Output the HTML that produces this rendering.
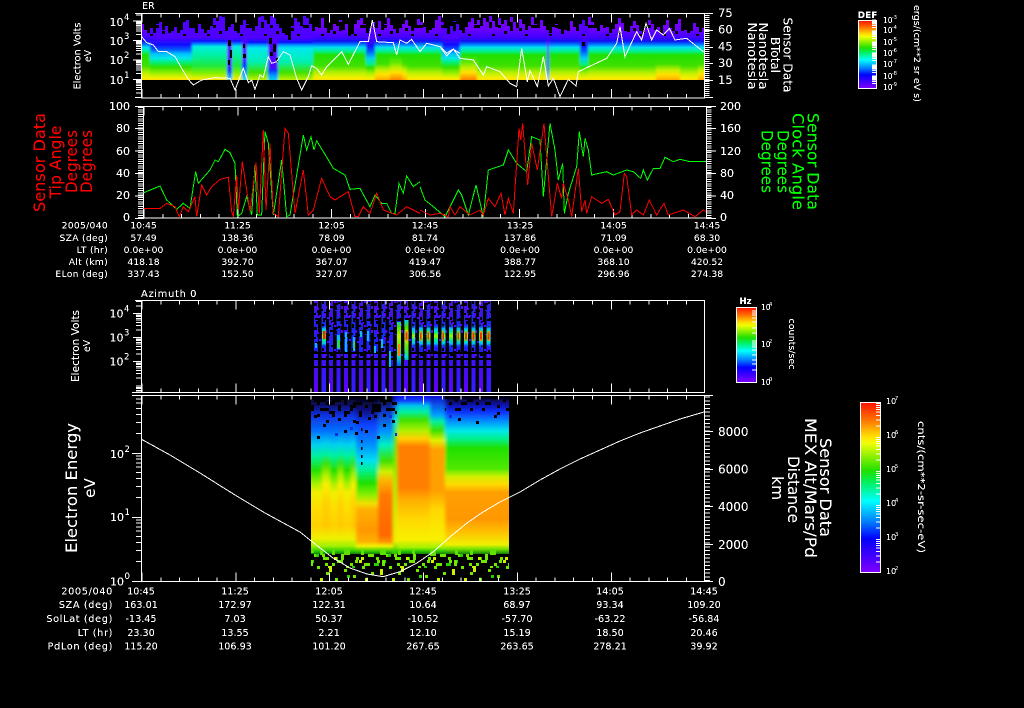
<!DOCTYPE html>
<html><head><meta charset="utf-8"><title>Sensor Data</title>
<style>
html,body{margin:0;padding:0;background:#000;width:1024px;height:708px;overflow:hidden}
svg{display:block}
text{font-family:"DejaVu Sans","Liberation Sans",sans-serif;fill:#fff}
.t1{font-size:9.2px;text-anchor:middle}
.t1l{font-size:9.2px;text-anchor:end;letter-spacing:.3px}
.t2{font-size:9.6px;text-anchor:middle}
.t2l{font-size:9.8px;text-anchor:end;letter-spacing:.6px}
.n{font-size:11px;text-anchor:end}
.nl{font-size:11.5px}
.e{font-size:8.5px}
.ln{fill:none;stroke-width:1;vector-effect:non-scaling-stroke;shape-rendering:crispEdges}
.ax{fill:none;stroke:#fff;stroke-width:1;shape-rendering:crispEdges}
</style></head><body>
<svg width="1024" height="708" viewBox="0 0 1024 708" xmlns="http://www.w3.org/2000/svg">
<defs>
<filter id="h" filterUnits="userSpaceOnUse" x="0" y="0" width="1024" height="708"><feComponentTransfer><feFuncA type="linear" slope="3" intercept="-0.75"/></feComponentTransfer></filter>
<filter id="b1" filterUnits="userSpaceOnUse" x="120" y="0" width="620" height="100"><feGaussianBlur stdDeviation="1 0"/></filter>
<filter id="b2" filterUnits="userSpaceOnUse" x="290" y="390" width="240" height="200"><feGaussianBlur stdDeviation="1.6 0"/></filter>
<clipPath id="c1"><rect x="141" y="16" width="563" height="64"/></clipPath>
<clipPath id="c4"><rect x="311" y="396" width="198" height="158"/></clipPath>
<clipPath id="a1"><rect x="120" y="13" width="600" height="85.5"/></clipPath>
<clipPath id="a3"><rect x="120" y="300" width="600" height="92.5"/></clipPath>
<clipPath id="a4"><rect x="120" y="395" width="600" height="187"/></clipPath>

<linearGradient id="bar" x1="0" y1="0" x2="0" y2="1"><stop offset="0" stop-color="#ff1000"/><stop offset=".1" stop-color="#ff7000"/><stop offset=".2" stop-color="#ffe000"/><stop offset=".24" stop-color="#f0ff00"/><stop offset=".4" stop-color="#20e000"/><stop offset=".47" stop-color="#00f060"/><stop offset=".58" stop-color="#00ffff"/><stop offset=".7" stop-color="#0080ff"/><stop offset=".8" stop-color="#0000ff"/><stop offset="1" stop-color="#8000ff"/></linearGradient>

<linearGradient id="N" gradientUnits="userSpaceOnUse" x1="0" y1="16" x2="0" y2="80"><stop offset=".19" stop-color="#7000ff"/><stop offset=".34" stop-color="#4000ff"/><stop offset=".39" stop-color="#1010f0"/><stop offset=".44" stop-color="#0070ff"/><stop offset=".49" stop-color="#00e0f0"/><stop offset=".55" stop-color="#00f090"/><stop offset=".61" stop-color="#20e000"/><stop offset=".78" stop-color="#40e000"/><stop offset=".88" stop-color="#b0f000"/><stop offset=".96" stop-color="#f0f000"/><stop offset="1" stop-color="#ffe000"/></linearGradient>
<linearGradient id="L" gradientUnits="userSpaceOnUse" x1="0" y1="16" x2="0" y2="80"><stop offset=".34" stop-color="#5000ff"/><stop offset=".45" stop-color="#1010ff"/><stop offset=".53" stop-color="#0060ff"/><stop offset=".59" stop-color="#00c0ff"/><stop offset=".66" stop-color="#00e8e8"/><stop offset=".72" stop-color="#00f080"/><stop offset=".8" stop-color="#30e000"/><stop offset=".9" stop-color="#a0f000"/><stop offset=".97" stop-color="#f0f000"/><stop offset="1" stop-color="#ffe000"/></linearGradient>
<linearGradient id="V" gradientUnits="userSpaceOnUse" x1="0" y1="16" x2="0" y2="80"><stop offset=".34" stop-color="#5000ff"/><stop offset=".39" stop-color="#1010ff"/><stop offset=".44" stop-color="#0090ff"/><stop offset=".48" stop-color="#00f0e0"/><stop offset=".62" stop-color="#00f0a0"/><stop offset=".78" stop-color="#20e840"/><stop offset=".89" stop-color="#80f000"/><stop offset=".97" stop-color="#e0f000"/><stop offset="1" stop-color="#ffe000"/></linearGradient>
<linearGradient id="C" gradientUnits="userSpaceOnUse" x1="0" y1="16" x2="0" y2="80"><stop offset=".34" stop-color="#5000ff"/><stop offset=".41" stop-color="#1010ff"/><stop offset=".45" stop-color="#0090ff"/><stop offset=".5" stop-color="#00e8f0"/><stop offset=".72" stop-color="#00f0b0"/><stop offset=".88" stop-color="#40e000"/><stop offset="1" stop-color="#c0f000"/></linearGradient>
<linearGradient id="D" gradientUnits="userSpaceOnUse" x1="0" y1="16" x2="0" y2="80"><stop offset=".8" stop-color="#5000ff"/><stop offset=".85" stop-color="#1030ff"/><stop offset=".92" stop-color="#0090ff"/><stop offset="1" stop-color="#00d0f0"/></linearGradient>
<linearGradient id="D2" gradientUnits="userSpaceOnUse" x1="0" y1="16" x2="0" y2="80"><stop offset=".69" stop-color="#5000ff"/><stop offset=".77" stop-color="#1030ff"/><stop offset=".88" stop-color="#0090ff"/><stop offset="1" stop-color="#00e0f0"/></linearGradient>
<linearGradient id="H" gradientUnits="userSpaceOnUse" x1="0" y1="16" x2="0" y2="80"><stop offset=".19" stop-color="#7000ff"/><stop offset=".34" stop-color="#4000ff"/><stop offset=".39" stop-color="#1010f0"/><stop offset=".44" stop-color="#0070ff"/><stop offset=".49" stop-color="#00e0f0"/><stop offset=".55" stop-color="#00f090"/><stop offset=".61" stop-color="#20e000"/><stop offset=".72" stop-color="#60e800"/><stop offset=".81" stop-color="#c0f000"/><stop offset=".88" stop-color="#ffe000"/><stop offset=".94" stop-color="#ffb000"/><stop offset="1" stop-color="#ff8000"/></linearGradient>
<linearGradient id="M" gradientUnits="userSpaceOnUse" x1="0" y1="16" x2="0" y2="80"><stop offset=".19" stop-color="#7000ff"/><stop offset=".34" stop-color="#4000ff"/><stop offset=".39" stop-color="#1010f0"/><stop offset=".44" stop-color="#0070ff"/><stop offset=".49" stop-color="#00e0f0"/><stop offset=".55" stop-color="#00f090"/><stop offset=".61" stop-color="#20e000"/><stop offset=".75" stop-color="#40e000"/><stop offset=".84" stop-color="#c0f000"/><stop offset=".91" stop-color="#ffe000"/><stop offset=".97" stop-color="#ffc000"/><stop offset="1" stop-color="#ffa800"/></linearGradient>
<linearGradient id="B" gradientUnits="userSpaceOnUse" x1="0" y1="16" x2="0" y2="80"><stop offset=".34" stop-color="#5000ff"/><stop offset=".47" stop-color="#1010ff"/><stop offset=".56" stop-color="#0060ff"/><stop offset=".66" stop-color="#00d0f0"/><stop offset=".75" stop-color="#00f090"/><stop offset=".81" stop-color="#30e000"/><stop offset=".89" stop-color="#a0f000"/><stop offset=".97" stop-color="#f0f000"/><stop offset="1" stop-color="#ffe000"/></linearGradient>

<linearGradient id="A4" gradientUnits="userSpaceOnUse" x1="0" y1="396" x2="0" y2="554"><stop offset="0" stop-color="#000"/><stop offset=".06" stop-color="#101070"/><stop offset=".12" stop-color="#1030e0"/><stop offset=".22" stop-color="#0070ff"/><stop offset=".31" stop-color="#00d0f0"/><stop offset=".38" stop-color="#00f0a0"/><stop offset=".47" stop-color="#20e000"/><stop offset=".55" stop-color="#a0f000"/><stop offset=".61" stop-color="#f0f000"/><stop offset=".72" stop-color="#ffdc00"/><stop offset=".82" stop-color="#ffd000"/><stop offset=".9" stop-color="#f0f000"/><stop offset=".95" stop-color="#a0f000"/><stop offset=".98" stop-color="#30d000"/><stop offset="1" stop-color="#108000"/></linearGradient>
<linearGradient id="A5" gradientUnits="userSpaceOnUse" x1="0" y1="396" x2="0" y2="554"><stop offset="0" stop-color="#000"/><stop offset=".06" stop-color="#101070"/><stop offset=".12" stop-color="#1030e0"/><stop offset=".22" stop-color="#0070ff"/><stop offset=".3" stop-color="#00d0f0"/><stop offset=".37" stop-color="#00f0a0"/><stop offset=".43" stop-color="#40e000"/><stop offset=".5" stop-color="#b0f000"/><stop offset=".56" stop-color="#f8f000"/><stop offset=".68" stop-color="#ffd000"/><stop offset=".82" stop-color="#ffc800"/><stop offset=".9" stop-color="#f0f000"/><stop offset=".95" stop-color="#a0f000"/><stop offset=".98" stop-color="#30d000"/><stop offset="1" stop-color="#108000"/></linearGradient>
<linearGradient id="B4" gradientUnits="userSpaceOnUse" x1="0" y1="396" x2="0" y2="554"><stop offset="0" stop-color="#000"/><stop offset=".09" stop-color="#101080"/><stop offset=".18" stop-color="#1040ff"/><stop offset=".31" stop-color="#0090ff"/><stop offset=".41" stop-color="#00e0f0"/><stop offset=".47" stop-color="#00f090"/><stop offset=".55" stop-color="#20e000"/><stop offset=".63" stop-color="#90f000"/><stop offset=".68" stop-color="#f0e000"/><stop offset=".72" stop-color="#ffb000"/><stop offset=".85" stop-color="#ff9800"/><stop offset=".92" stop-color="#ffb000"/><stop offset=".95" stop-color="#f0f000"/><stop offset=".98" stop-color="#40d000"/><stop offset="1" stop-color="#108000"/></linearGradient>
<linearGradient id="C4" gradientUnits="userSpaceOnUse" x1="0" y1="396" x2="0" y2="554"><stop offset="0" stop-color="#000"/><stop offset=".09" stop-color="#1030c0"/><stop offset=".22" stop-color="#0090ff"/><stop offset=".31" stop-color="#00f0c0"/><stop offset=".41" stop-color="#40e000"/><stop offset=".48" stop-color="#d0f000"/><stop offset=".54" stop-color="#ffb000"/><stop offset=".63" stop-color="#ff7800"/><stop offset=".88" stop-color="#ff6800"/><stop offset=".92" stop-color="#ff9000"/><stop offset=".95" stop-color="#f0f000"/><stop offset=".98" stop-color="#40d000"/><stop offset="1" stop-color="#108000"/></linearGradient>
<linearGradient id="D4" gradientUnits="userSpaceOnUse" x1="0" y1="396" x2="0" y2="554"><stop offset=".02" stop-color="#1010c0"/><stop offset=".15" stop-color="#00e0f0"/><stop offset=".28" stop-color="#40e000"/><stop offset=".53" stop-color="#a0f000"/><stop offset=".92" stop-color="#f0f000"/><stop offset=".98" stop-color="#40d000"/></linearGradient>
<linearGradient id="E4" gradientUnits="userSpaceOnUse" x1="0" y1="396" x2="0" y2="554"><stop offset="0" stop-color="#1010e0"/><stop offset=".03" stop-color="#1040ff"/><stop offset=".06" stop-color="#00c0f0"/><stop offset=".1" stop-color="#00f0a0"/><stop offset=".15" stop-color="#40e000"/><stop offset=".22" stop-color="#b0f000"/><stop offset=".27" stop-color="#ffd000"/><stop offset=".32" stop-color="#ff8000"/><stop offset=".58" stop-color="#ff8000"/><stop offset=".66" stop-color="#ffb000"/><stop offset=".78" stop-color="#ffd800"/><stop offset=".91" stop-color="#f8f000"/><stop offset=".96" stop-color="#a0f000"/><stop offset=".98" stop-color="#30d000"/><stop offset="1" stop-color="#108000"/></linearGradient>
<linearGradient id="E5" gradientUnits="userSpaceOnUse" x1="0" y1="396" x2="0" y2="554"><stop offset="0" stop-color="#1010d0"/><stop offset=".12" stop-color="#00a0ff"/><stop offset=".16" stop-color="#00f0a0"/><stop offset=".22" stop-color="#40e000"/><stop offset=".28" stop-color="#e0f000"/><stop offset=".34" stop-color="#ffa000"/><stop offset=".6" stop-color="#ffa000"/><stop offset=".72" stop-color="#ffd800"/><stop offset=".91" stop-color="#f8f000"/><stop offset=".96" stop-color="#a0f000"/><stop offset=".98" stop-color="#30d000"/><stop offset="1" stop-color="#108000"/></linearGradient>
<linearGradient id="F4" gradientUnits="userSpaceOnUse" x1="0" y1="396" x2="0" y2="554"><stop offset="0" stop-color="#000"/><stop offset=".05" stop-color="#1010a0"/><stop offset=".1" stop-color="#1030ff"/><stop offset=".16" stop-color="#0090ff"/><stop offset=".22" stop-color="#00e8e8"/><stop offset=".27" stop-color="#00f090"/><stop offset=".33" stop-color="#20e000"/><stop offset=".46" stop-color="#50e800"/><stop offset=".51" stop-color="#d0f000"/><stop offset=".56" stop-color="#ffd800"/><stop offset=".61" stop-color="#ffa000"/><stop offset=".78" stop-color="#ff9800"/><stop offset=".86" stop-color="#ffc000"/><stop offset=".94" stop-color="#f0f000"/><stop offset=".97" stop-color="#70e000"/><stop offset="1" stop-color="#108000"/></linearGradient>

<linearGradient id="S1" gradientUnits="userSpaceOnUse" x1="0" y1="300" x2="0" y2="392"><stop offset="0" stop-color="#5010e0"/><stop offset=".3" stop-color="#2020f0"/><stop offset=".55" stop-color="#2020ff"/><stop offset=".7" stop-color="#4010f0"/><stop offset="1" stop-color="#6000ff"/></linearGradient>
<linearGradient id="S2" gradientUnits="userSpaceOnUse" x1="0" y1="300" x2="0" y2="392"><stop offset="0" stop-color="#3020d0"/><stop offset=".4" stop-color="#1030ff"/><stop offset=".6" stop-color="#4010ff"/><stop offset=".72" stop-color="#4010ff"/><stop offset="1" stop-color="#3020ff"/></linearGradient>
<linearGradient id="Hc" gradientUnits="userSpaceOnUse" x1="0" y1="324" x2="0" y2="348"><stop offset="0" stop-color="#2020ff" stop-opacity="0"/><stop offset=".2" stop-color="#00c0ff"/><stop offset=".34" stop-color="#00f080"/><stop offset=".5" stop-color="#a0f000"/><stop offset=".66" stop-color="#00f080"/><stop offset=".82" stop-color="#00c0ff"/><stop offset="1" stop-color="#2020ff" stop-opacity="0"/></linearGradient>
<linearGradient id="Hr" gradientUnits="userSpaceOnUse" x1="0" y1="330" x2="0" y2="342"><stop offset="0" stop-color="#f0f000"/><stop offset=".3" stop-color="#ff3000"/><stop offset=".7" stop-color="#ff2000"/><stop offset="1" stop-color="#f0f000"/></linearGradient>
<linearGradient id="Hl" gradientUnits="userSpaceOnUse" x1="0" y1="320" x2="0" y2="366"><stop offset="0" stop-color="#00d0f0"/><stop offset=".14" stop-color="#40e000"/><stop offset=".35" stop-color="#c0f000"/><stop offset=".6" stop-color="#60e800"/><stop offset=".8" stop-color="#00e0c0"/><stop offset="1" stop-color="#0060ff"/></linearGradient>

<pattern id="p1" patternUnits="userSpaceOnUse" x="141" y="22" width="57" height="21"><path fill="#000" d="M6 0h3v6h-3zM15 3h3v3h-3zM27 0h3v9h-3zM36 6h3v3h-3zM48 3h6v3h-6zM21 9h3v3h-3zM9 12h3v6h-3zM42 12h3v3h-3zM33 15h3v6h-3zM51 15h3v3h-3zM0 15h3v3h-3z"/></pattern>
<pattern id="p4a" patternUnits="userSpaceOnUse" x="311" y="396" width="66" height="27"><path fill="#000" d="M0 0h6v3h-6zM12 0h3v6h-3zM24 3h6v3h-6zM36 0h3v3h-3zM48 0h9v3h-9zM60 3h3v3h-3zM6 6h3v3h-3zM18 6h6v3h-6zM33 6h3v3h-3zM42 6h6v3h-6zM54 9h3v3h-3zM0 12h3v3h-3zM12 12h6v3h-6zM27 12h3v3h-3zM39 12h3v3h-3zM63 12h3v3h-3zM6 18h3v3h-3zM21 18h3v3h-3zM33 18h3v3h-3zM48 18h3v3h-3zM57 21h3v3h-3zM15 24h3v3h-3zM42 24h3v3h-3z"/></pattern>
<pattern id="p4b" patternUnits="userSpaceOnUse" x="311" y="415" width="60" height="24"><path fill="#000" d="M3 0h3v3h-3zM27 3h3v3h-3zM45 6h3v3h-3zM12 9h3v3h-3zM54 15h3v3h-3zM33 15h3v3h-3zM6 21h3v3h-3z"/><path fill="#1030e0" d="M18 0h3v3h-3zM39 12h3v3h-3zM24 18h3v3h-3z"/></pattern>
<pattern id="pg" patternUnits="userSpaceOnUse" x="311" y="554" width="72" height="27"><path fill="#70e800" d="M3 0h3v3h-3zM12 3h6v3h-6zM30 0h3v6h-3zM45 3h3v3h-3zM57 0h6v3h-6zM21 9h3v3h-3zM39 9h3v3h-3zM66 6h3v3h-3zM6 12h3v3h-3zM51 12h3v3h-3zM15 18h3v3h-3zM33 15h3v3h-3zM60 18h3v3h-3zM42 21h3v3h-3zM24 24h3v3h-3z"/><path fill="#d0f000" d="M18 12h3v6h-3zM48 6h3v3h-3zM69 15h3v6h-3zM9 24h3v3h-3zM54 24h3v3h-3z"/><path fill="#20d000" d="M24 3h3v3h-3zM0 6h3v3h-3zM36 21h3v3h-3zM63 9h3v3h-3z"/></pattern>
<pattern id="p3" patternUnits="userSpaceOnUse" x="314" y="300" width="30" height="24"><path fill="#000" d="M0 3h3v2h-3zM8 0h2v3h-2zM16 6h3v2h-3zM24 2h2v2h-2zM3 10h2v3h-2zM10 12h3v2h-3zM19 14h2v3h-2zM26 11h3v2h-3zM1 18h3v2h-3zM9 20h2v2h-2zM17 21h3v2h-3zM25 18h2v3h-2z"/><path fill="#6000ff" d="M2 7h2v2h-2zM11 6h2v3h-2zM20 1h2v2h-2zM27 6h2v3h-2zM5 15h2v2h-2zM13 17h2v2h-2zM21 9h2v2h-2z"/></pattern>
<pattern id="p3g" patternUnits="userSpaceOnUse" x="314" y="300" width="7.5" height="92"><rect x="0" y="52" width="7.5" height="2" fill="#000"/><rect x="0" y="58" width="7.5" height="2" fill="#000"/><rect x="0" y="66" width="7.5" height="2" fill="#000"/></pattern>

<path id="d64" class="ax" d="M-5 -19.3h5M-5 -30.5h5M-5 -38.5h5M-5 -44.7h5M-5 -49.8h5M-5 -54.1h5M-5 -57.8h5M-5 -61.1h5"/>
<path id="d20" class="ax" d="M-5 -5.9h5M-5 -9.3h5M-5 -11.7h5M-5 -13.6h5M-5 -15.2h5M-5 -16.5h5M-5 -17.6h5M-5 -18.6h5"/>
<path id="d24" class="ax" d="M-5 -7.2h5M-5 -11.4h5M-5 -14.4h5M-5 -16.8h5M-5 -18.7h5M-5 -20.3h5M-5 -21.7h5M-5 -22.9h5"/>
<path id="d34" class="ax" d="M-4 -10.2h4M-4 -16.2h4M-4 -20.5h4M-4 -23.8h4M-4 -26.5h4M-4 -28.7h4M-4 -30.7h4M-4 -32.4h4"/>
<path id="d11" class="ax" d="M-4 -3.4h4M-4 -5.4h4M-4 -6.8h4M-4 -7.9h4M-4 -8.8h4M-4 -9.5h4M-4 -10.2h4M-4 -10.8h4"/>
</defs>
<rect width="1024" height="708" fill="#000"/>

<!-- PANEL 1 spectrogram -->
<g clip-path="url(#c1)">
<g filter="url(#b1)">
<rect x="130" y="16" width="20" height="64" fill="url(#N)"/>
<rect x="150" y="16" width="10" height="64" fill="url(#L)"/>
<rect x="160" y="16" width="32" height="64" fill="url(#L)"/>
<rect x="192" y="16" width="35" height="64" fill="url(#V)"/>
<rect x="227" y="16" width="5" height="64" fill="url(#D)"/>
<rect x="232" y="16" width="10" height="64" fill="url(#V)"/>
<rect x="242" y="16" width="5" height="64" fill="url(#D2)"/>
<rect x="247" y="16" width="21" height="64" fill="url(#C)"/>
<rect x="268" y="16" width="10" height="64" fill="url(#D)"/>
<rect x="278" y="16" width="35" height="64" fill="url(#C)"/>
<rect x="313" y="16" width="53" height="64" fill="url(#N)"/>
<rect x="366" y="16" width="9" height="64" fill="url(#B)"/>
<rect x="375" y="16" width="15" height="64" fill="url(#M)"/>
<rect x="390" y="16" width="12" height="64" fill="url(#H)"/>
<rect x="402" y="16" width="5" height="64" fill="url(#M)"/>
<rect x="407" y="16" width="35" height="64" fill="url(#N)"/>
<rect x="442" y="16" width="18" height="64" fill="url(#L)"/>
<rect x="460" y="16" width="17" height="64" fill="url(#H)"/>
<rect x="477" y="16" width="70" height="64" fill="url(#N)"/>
<rect x="547" y="16" width="2" height="64" fill="url(#D)"/>
<rect x="549" y="16" width="31" height="64" fill="url(#N)"/>
<rect x="580" y="16" width="8" height="64" fill="url(#B)"/>
<rect x="588" y="16" width="68" height="64" fill="url(#N)"/>
<rect x="656" y="16" width="24" height="64" fill="url(#M)"/>
<rect x="680" y="16" width="18" height="64" fill="url(#N)"/>
<rect x="698" y="16" width="20" height="64" fill="url(#M)"/>
</g>
<path fill="#000" d="M141 16V24h3V30h3V33h3V28h3V33h3V24h3V22h3V30h3V26h3V33h3V31h3V27h3V33h3V30h3V22h3V20h3V25h3V28h3V33h3V24h3V29h3V33h3V30h3V26h3V18h3V21h3V16h3V17h3V22h3V27h3V24h3V30h3V33h3V25h3V20h3V24h3V28h3V31h3V26h3V17h3V16h3V20h3V24h3V16h3V18h3V24h3V28h3V33h3V35h3V40h3V26h3V18h3V22h3V26h3V16h3V18h3V24h3V31h3V27h3V22h3V18h3V28h3V33h3V30h3V24h3V26h3V20h3V30h3V24h3V36h3V34h3V24h3V20h3V18h3V24h3V33h3V28h3V22h3V26h3V21h3V30h3V24h3V18h3V25h3V29h3V33h3V28h3V24h3V20h3V26h3V31h3V28h3V19h3V22h3V27h3V33h3V30h3V25h3V20h3V16h3V22h3V28h3V32h3V26h3V21h3V24h3V30h3V33h3V27h3V22h3V18h3V24h3V20h3V26h3V18h3V22h3V16h3V21h3V27h3V18h3V24h3V20h3V26h3V17h3V22h3V28h3V19h3V24h3V30h3V26h3V17h3V24h3V28h3V20h3V26h3V30h3V33h3V27h3V24h3V29h3V33h3V30h3V25h3V21h3V27h3V31h3V24h3V20h3V26h3V17h3V22h3V28h3V31h3V25h3V22h3V27h3V33h3V29h3V24h3V18h3V23h3V28h3V32h3V26h3V21h3V25h3V31h3V33h3V28h3V20h3V24h3V30h3V27h3V33h3V25h3V20h3V28h3V31h3V24h3V19h3V26h3V30h3V33h3V28h3V23h3V27h3V32h3V26h3V22h3V29h3V25h3V31h3V27h3V33h3V24h3V28h3V30h3V26h3V16H141z"/>
<rect x="141" y="22" width="563" height="14" fill="url(#p1)"/>
<path fill="#000" d="M228 40h3v6h-3zM230 50h2v8h-2zM228 60h2v5h-2zM269 38h3v6h-3zM273 44h3v8h-3zM270 52h3v4h-3zM276 58h2v4h-2zM243 44h2v4h-2zM243 54h3v4h-3zM582 42h3v4h-3z"/>
</g>

<!-- PANEL 3 spectrogram -->
<g>
<path fill="url(#S1)" d="M314 301h4v91h-4zM329 301h4v91h-4zM344 301h4v91h-4zM359 301h4v91h-4zM374 301h4v91h-4zM389 301h4v91h-4zM404 301h4v91h-4zM419 301h4v91h-4zM434 301h4v91h-4zM449 301h4v91h-4zM464 301h4v91h-4zM479 301h4v91h-4z"/>
<path fill="url(#S2)" d="M321.5 301h4.5v91h-4.5zM336.5 301h4v91h-4zM351.5 301h4v91h-4zM366.5 301h4v91h-4zM381.5 301h4v91h-4zM396.5 301h4.5v91h-4.500zM411.5 301h4v91h-4zM426.5 301h4v91h-4zM441.5 301h4v91h-4zM456.5 301h4v91h-4zM471.5 301h4v91h-4zM486.5 301h4.5v91h-4.500z"/>
<rect x="314" y="300" width="177" height="56" fill="url(#p3)"/>
<rect x="301" y="293" width="177" height="40" fill="url(#p3)" transform="translate(13 7)"/>
<rect x="314" y="300" width="177" height="92" fill="url(#p3g)"/>
<rect x="322" y="326" width="4" height="20" fill="url(#Hc)"/>
<rect x="323" y="331" width="2.500" height="8" fill="#ff2000"/>
<path fill="#00c0f0" d="M315 343h2v5h-2zM337 335h3v14h-3zM345 332h2v20h-2zM353 337h2v14h-2zM360 331h2v6h-2zM367 331h2v10h-2zM374 346h2v7h-2zM381 339h2v9h-2zM389 351h2v16h-2zM397 358h3v8h-3z"/>
<path fill="#40e000" d="M337.500 340h2v8h-2zM353.500 341h1.500v7h-1.500z"/>
<rect x="397" y="322" width="4" height="44" fill="url(#Hl)"/>
<rect x="398" y="344" width="2" height="12" fill="#ff8000"/>
<rect x="404.500" y="320" width="4" height="40" fill="url(#Hl)"/>
<rect x="412" y="324" width="3" height="28" fill="url(#Hc)"/>
<g fill="url(#Hc)"><rect x="419" y="324" width="4" height="24"/><rect x="426.500" y="324" width="4" height="24"/><rect x="434" y="324" width="4" height="24"/><rect x="441.500" y="324" width="4" height="24"/><rect x="449" y="324" width="4" height="24"/><rect x="456.500" y="324" width="4" height="24"/><rect x="464" y="324" width="4" height="24"/><rect x="471.500" y="324" width="4" height="24"/><rect x="479" y="324" width="4" height="24"/><rect x="486.500" y="324" width="4" height="24"/></g>
<g fill="url(#Hr)"><rect x="405.500" y="330" width="2" height="12"/><rect x="420" y="331" width="1.500" height="10"/><rect x="427.500" y="331" width="1.500" height="10"/><rect x="442.500" y="331" width="1.500" height="10"/><rect x="457.500" y="331" width="1.500" height="10"/><rect x="465" y="331" width="2" height="10"/><rect x="472.500" y="331" width="2" height="10"/><rect x="480" y="331" width="2" height="10"/><rect x="487.500" y="331" width="2" height="10"/></g>
</g>

<!-- PANEL 4 spectrogram -->
<g clip-path="url(#c4)">
<g filter="url(#b2)">
<rect x="300" y="396" width="22" height="158" fill="url(#A4)"/>
<rect x="322" y="396" width="8" height="158" fill="url(#A5)"/>
<rect x="330" y="396" width="8" height="158" fill="url(#A4)"/>
<rect x="338" y="396" width="5" height="158" fill="url(#A5)"/>
<rect x="343" y="396" width="8" height="158" fill="url(#A4)"/>
<rect x="351" y="396" width="5" height="158" fill="url(#A5)"/>
<rect x="356" y="396" width="22" height="158" fill="url(#B4)"/>
<rect x="378" y="396" width="15" height="158" fill="url(#C4)"/>
<rect x="393" y="396" width="4" height="158" fill="url(#D4)"/>
<rect x="397" y="396" width="33" height="158" fill="url(#E4)"/>
<rect x="430" y="396" width="15" height="158" fill="url(#E5)"/>
<rect x="445" y="396" width="75" height="158" fill="url(#F4)"/>
</g>
<rect x="311" y="396" width="86" height="27" fill="url(#p4a)"/>
<rect x="290" y="393" width="86" height="19" fill="url(#p4a)" transform="translate(21 3)"/>
<rect x="445" y="396" width="64" height="18" fill="url(#p4a)"/>
<rect x="311" y="415" width="86" height="24" fill="url(#p4b)"/>
<rect x="445" y="412" width="64" height="12" fill="url(#p4b)"/>
<path fill="#000" d="M361 428h1.500v3h-1.500zM361 440h1.500v3h-1.500zM361 447h1.500v3h-1.500zM361 455h1.500v3h-1.500zM361 462h1.500v3h-1.500zM355 432h3v3h-3zM372 404h9v8h-9z"/>
</g>
<rect x="311" y="554" width="198" height="27" fill="url(#pg)"/>
<rect x="270" y="548" width="198" height="14" fill="url(#pg)" transform="translate(41 6)"/>
<path fill="#60e000" d="M311 548h3v5h-3zM320 549h3v6h-3zM332 550h3v5h-3zM344 549h6v6h-6zM361 550h3v5h-3zM380 549h6v6h-6zM398 550h3v5h-3zM412 549h3v5h-3zM430 550h6v6h-6zM455 549h3v6h-3zM470 550h3v5h-3zM490 549h6v6h-6z"/>

<!-- colour bars -->
<rect x="858.500" y="20.500" width="18" height="68" fill="url(#bar)" stroke="#fff"/>
<rect x="736.500" y="307.500" width="20" height="75" fill="url(#bar)" stroke="#fff"/>
<rect x="860.500" y="402.500" width="20" height="170" fill="url(#bar)" stroke="#fff"/>
<g>
<use href="#d11" x="876" y="87"/><use href="#d11" x="876" y="76"/><use href="#d11" x="876" y="64"/><use href="#d11" x="876" y="53"/><use href="#d11" x="876" y="42"/><use href="#d11" x="876" y="31"/>
<use href="#d34" x="880" y="572"/><use href="#d34" x="880" y="538"/><use href="#d34" x="880" y="504"/><use href="#d34" x="880" y="470"/><use href="#d34" x="880" y="436"/>
<path class="ax" d="M752 311h4M752 313h4M752 315h4M752 318h4M752 322h4M752 328h4M752 333h4M752 341h4M752 343h4M752 345h4M752 347h4M752 350h4M752 355h4M752 360h4M752 364h4M752 370h4"/>
</g>

<!-- Axes -->
<g class="ax">
<rect x="141.500" y="13.500" width="563" height="84.500"/>
<rect x="143.500" y="106.500" width="563" height="111.500"/>
<rect x="141.500" y="300.500" width="563" height="92"/>
<rect x="141.500" y="395.500" width="563" height="186"/>
</g>
<g fill="none" stroke="#fff" shape-rendering="crispEdges">
<path stroke-width="4" stroke-dasharray="1 17.77" d="M141.500 15.500H705M141.500 96H705M143.500 108.500H707M143.500 216H707M141.500 302.500H705M141.500 390.500H705M141.500 397.500H705M141.500 579.500H705"/>
<path stroke-width="9" stroke-dasharray="1 92.85" d="M141.500 18H705M141.500 93.500H705M143.500 111H707M143.500 213.500H707M141.500 305H705M141.500 388H705M141.500 400H705M141.500 577H705"/>
<path stroke-width="5" stroke-dasharray="1 1.24" d="M140.500 218V106M709 218V106"/>
<path stroke-width="5" stroke-dasharray="1 1" d="M707 98V14"/>
<path stroke-width="5" stroke-dasharray="1 2.74" d="M707.500 581V396"/>
<path stroke-width="1" d="M135 106.500h9M135 128.500h9M135 151h9M135 173.500h9M135 196h9M135 218.500h9M706 106.500h10M706 128.500h10M706 151h10M706 173.500h10M706 196h10M706 218.500h10M704 13.500h9M704 30.500h9M704 47.500h9M704 63.500h9M704 80.500h9M704 97.500h9M705 395.500h8M705 431.500h8M705 469.500h8M705 506.500h8M705 544.500h8M705 581.500h8"/>
</g>
<g clip-path="url(#a1)"><use href="#d20" x="141" y="99"/><use href="#d20" x="141" y="79.500"/><use href="#d20" x="141" y="60"/><use href="#d20" x="141" y="40.500"/><use href="#d20" x="141" y="21"/></g>
<path class="ax" d="M133 79.500h8M133 60h8M133 40.500h8M133 21h8M135 13.500h6M135 97.500h6"/>
<g clip-path="url(#a3)"><use href="#d24" x="141" y="409"/><use href="#d24" x="141" y="385"/><use href="#d24" x="141" y="361"/><use href="#d24" x="141" y="337"/><use href="#d24" x="141" y="313"/></g>
<path class="ax" d="M133 361.500h8M133 337.500h8M133 313.500h8M135 300.500h6M132 392.500h9"/>
<g clip-path="url(#a4)"><use href="#d64" x="141" y="581"/><use href="#d64" x="141" y="517"/><use href="#d64" x="141" y="453"/></g>
<path class="ax" d="M132 517.500h9M132 453.500h9M132 395.500h9M132 581.500h9"/>

<!-- Panel 1 white line -->
<g transform="translate(60 0) scale(.33333)"><polyline class="ln" stroke="#fff" points="245,110 260,128 280,135 295,155 320,155 345,170 365,205 385,238 400,255 425,240 465,233 510,235 525,270 550,205 565,248 575,240 585,268 600,225 610,232 625,170 635,190 650,185 670,155 690,165 710,235 725,270 745,230 755,197 770,205 785,225 800,200 825,175 845,155 865,193 900,125 925,125 937,60 950,125 1000,128 1010,165 1020,120 1040,130 1055,118 1080,155 1100,130 1140,140 1160,168 1180,148 1200,160"/></g>
<g transform="translate(440 0) scale(.33333)"><polyline class="ln" stroke="#fff" points="0,140 20,160 40,147 60,175 100,180 130,225 140,200 180,215 210,250 230,260 245,145 262,245 270,212 292,260 310,170 325,258 340,235 360,290 385,238 408,258 415,215 500,175 530,130 540,80 555,170 590,95 605,120 618,70 635,120 650,90 670,105 688,85 705,120 740,115 790,155"/></g>

<!-- Panel 2 lines -->
<g transform="translate(20 100) scale(.33333)">
<polyline class="ln" stroke="#00ff00" points="371,278 420,258 440,300 470,328 490,310 510,325 520,260 527,215 535,250 570,210 585,180 595,185 615,148 630,158 645,190 652,350 665,340 680,290 695,345 705,195 712,345 725,345 735,95 745,130 760,345 785,180 800,350 810,345 850,105 860,150 873,110 882,150 890,122 910,155 940,205 975,225 990,268 1020,265 1050,320 1065,285 1085,310 1100,310 1115,340 1125,340 1137,250 1150,280 1160,228 1180,260 1200,245"/>
<polyline class="ln" stroke="#ff0000" points="371,325 420,325 440,310 465,320 478,350 490,320 505,335 525,290 530,350 545,255 560,285 575,260 600,238 625,232 635,335 640,350 650,225 655,330 667,185 690,335 708,188 718,340 730,90 738,330 750,130 760,340 775,350 795,85 805,100 825,340 850,210 865,345 880,330 905,235 930,290 945,300 985,275 1005,350 1015,350 1030,320 1050,340 1070,280 1090,330 1130,345 1160,320 1200,340"/>
</g>
<g transform="translate(420 100) scale(.33333)">
<polyline class="ln" stroke="#00ff00" points="0,260 15,300 40,320 75,350 90,320 115,270 125,285 145,345 168,255 190,350 205,210 250,195 265,150 290,190 320,215 335,110 360,120 370,290 390,70 405,150 415,240 428,190 433,340 445,280 470,200 478,95 490,170 495,115 505,150 515,225 560,215 580,225 620,210 640,215 662,235 670,210 682,240 700,205 720,205 735,172 760,185 780,178 810,185 850,185 858,185"/>
<polyline class="ln" stroke="#ff0000" points="0,330 30,345 60,340 85,350 90,320 105,345 120,320 150,345 180,330 190,345 205,295 225,320 243,280 255,345 265,295 280,340 297,85 302,120 308,70 323,255 335,130 352,210 372,70 395,350 412,250 425,295 430,250 445,300 455,350 475,205 485,335 495,300 500,340 515,290 545,310 565,298 585,345 600,335 613,220 620,230 635,345 650,330 670,345 688,300 710,345 732,310 745,345 790,330 825,350 850,330 858,335"/>
</g>

<!-- Panel 4 line -->
<polyline class="ln" stroke="#fff" points="141,439 170,455 200,473 235,495 265,513 300,532 310,540 333,558 350,568 367,574 383,576.700 400,571.700 417,563 433,552 450,537 467,523 483,512 500,502 520,492 540,480 560,469 580,459 600,450 620,441 640,433 660,426 680,419 704,412"/>

<!-- TEXT -->
<g filter="url(#h)">
<text x="142" y="9" font-size="9.500">ER</text>
<text x="141" y="297" font-size="10" letter-spacing=".6">Azimuth 0</text>

<text x="123.500" y="26" class="n">10</text><text x="124" y="20" class="e">4</text>
<text x="123.500" y="45" class="n">10</text><text x="124" y="39" class="e">3</text>
<text x="123.500" y="64" class="n">10</text><text x="124" y="58" class="e">2</text>
<text x="123.500" y="84" class="n">10</text><text x="124" y="78" class="e">1</text>

<text x="123.500" y="317.500" class="n">10</text><text x="124" y="311.500" class="e">4</text>
<text x="123.500" y="341.500" class="n">10</text><text x="124" y="335.500" class="e">3</text>
<text x="123.500" y="365.500" class="n">10</text><text x="124" y="359.500" class="e">2</text>

<text x="124" y="458" class="n">10</text><text x="124.500" y="452" class="e">2</text>
<text x="124" y="521" class="n">10</text><text x="124.500" y="515" class="e">1</text>
<text x="124" y="585.500" class="n">10</text><text x="124.500" y="579" class="e">0</text>

<text x="130" y="110" class="n">100</text><text x="130" y="132" class="n">80</text><text x="130" y="155" class="n">60</text><text x="130" y="177" class="n">40</text><text x="130" y="199" class="n">20</text><text x="130" y="221" class="n">0</text>

<text x="720" y="110" font-size="11">200</text><text x="720" y="132" font-size="11">160</text><text x="720" y="155" font-size="11">120</text><text x="720" y="177" font-size="11">80</text><text x="720" y="199" font-size="11">40</text><text x="720" y="221" font-size="11">0</text>
<text x="718" y="17" font-size="11.500">75</text><text x="718" y="33.500" font-size="11.500">60</text><text x="718" y="50.500" font-size="11.500">45</text><text x="718" y="67" font-size="11.500">30</text><text x="718" y="84" font-size="11.500">15</text>
<text x="718" y="436" font-size="12">8000</text><text x="718" y="473.500" font-size="12">6000</text><text x="718" y="511" font-size="12">4000</text><text x="718" y="549" font-size="12">2000</text><text x="718" y="586" font-size="12">0</text>

<text transform="translate(80.500 56) rotate(-90)" text-anchor="middle" font-size="10" textLength="67" lengthAdjust="spacingAndGlyphs">Electron Volts</text>
<text transform="translate(91 56) rotate(-90)" text-anchor="middle" font-size="9.500">eV</text>
<text transform="translate(783.500 55) rotate(90)" text-anchor="middle" font-size="12" textLength="75" lengthAdjust="spacingAndGlyphs">Sensor Data</text>
<text transform="translate(771 55) rotate(90)" text-anchor="middle" font-size="12" textLength="36" lengthAdjust="spacingAndGlyphs">BTotal</text>
<text transform="translate(759 56) rotate(90)" text-anchor="middle" font-size="12" textLength="67" lengthAdjust="spacingAndGlyphs">Nanotesla</text>
<text transform="translate(748 56) rotate(90)" text-anchor="middle" font-size="12" textLength="67" lengthAdjust="spacingAndGlyphs">Nanotesla</text>

<text style="fill:#f00" transform="translate(45 162.500) rotate(-90)" text-anchor="middle" font-size="16" textLength="99" lengthAdjust="spacingAndGlyphs">Sensor Data</text>
<text style="fill:#f00" transform="translate(61 162) rotate(-90)" text-anchor="middle" font-size="16" textLength="73" lengthAdjust="spacingAndGlyphs">Tip Angle</text>
<text style="fill:#f00" transform="translate(77 161.500) rotate(-90)" text-anchor="middle" font-size="16" textLength="63" lengthAdjust="spacingAndGlyphs">Degrees</text>
<text style="fill:#f00" transform="translate(92 161.500) rotate(-90)" text-anchor="middle" font-size="16" textLength="63" lengthAdjust="spacingAndGlyphs">Degrees</text>
<text style="fill:#0f0" transform="translate(807.500 161.500) rotate(90)" text-anchor="middle" font-size="16" textLength="97" lengthAdjust="spacingAndGlyphs">Sensor Data</text>
<text style="fill:#0f0" transform="translate(792.500 161.500) rotate(90)" text-anchor="middle" font-size="16" textLength="97" lengthAdjust="spacingAndGlyphs">Clock Angle</text>
<text style="fill:#0f0" transform="translate(777.500 161.500) rotate(90)" text-anchor="middle" font-size="16" textLength="63" lengthAdjust="spacingAndGlyphs">Degrees</text>
<text style="fill:#0f0" transform="translate(761.500 161.500) rotate(90)" text-anchor="middle" font-size="16" textLength="63" lengthAdjust="spacingAndGlyphs">Degrees</text>

<text transform="translate(79 346) rotate(-90)" text-anchor="middle" font-size="10.500" textLength="72" lengthAdjust="spacingAndGlyphs">Electron Volts</text>
<text transform="translate(90 346) rotate(-90)" text-anchor="middle" font-size="9.500">eV</text>
<text transform="translate(77 488) rotate(-90)" text-anchor="middle" font-size="16" textLength="130" lengthAdjust="spacingAndGlyphs">Electron Energy</text>
<text transform="translate(95 488) rotate(-90)" text-anchor="middle" font-size="15">eV</text>
<text transform="translate(820 487.500) rotate(90)" text-anchor="middle" font-size="16" textLength="99" lengthAdjust="spacingAndGlyphs">Sensor Data</text>
<text transform="translate(805 488) rotate(90)" text-anchor="middle" font-size="16" textLength="140" lengthAdjust="spacingAndGlyphs">MEX Alt/Mars/Pd</text>
<text transform="translate(788 489.500) rotate(90)" text-anchor="middle" font-size="16" textLength="67" lengthAdjust="spacingAndGlyphs">Distance</text>
<text transform="translate(772 488) rotate(90)" text-anchor="middle" font-size="16" textLength="24" lengthAdjust="spacingAndGlyphs">km</text>

<text x="867.500" y="18" text-anchor="middle" font-size="9" font-weight="bold">DEF</text>
<text x="883" y="23" font-size="7.500">10</text><text x="892" y="19" font-size="5">-3</text>
<text x="883" y="33" font-size="7.500">10</text><text x="892" y="29" font-size="5">-4</text>
<text x="883" y="45" font-size="7.500">10</text><text x="892" y="41" font-size="5">-5</text>
<text x="883" y="56" font-size="7.500">10</text><text x="892" y="52" font-size="5">-6</text>
<text x="883" y="67" font-size="7.500">10</text><text x="892" y="63" font-size="5">-7</text>
<text x="883" y="79" font-size="7.500">10</text><text x="892" y="75" font-size="5">-8</text>
<text x="883" y="90" font-size="7.500">10</text><text x="892" y="86" font-size="5">-9</text>
<text transform="translate(914 53.500) rotate(90)" text-anchor="middle" font-size="9" textLength="97" lengthAdjust="spacingAndGlyphs">ergs/(cm**2 sr eV s)</text>

<text x="745.500" y="304" text-anchor="middle" font-size="8.500" font-weight="bold">Hz</text>
<text x="761" y="310" font-size="7.500">10</text><text x="769" y="306" font-size="5">4</text>
<text x="761" y="347" font-size="7.500">10</text><text x="769" y="343" font-size="5">2</text>
<text x="761" y="385" font-size="7.500">10</text><text x="769" y="381" font-size="5">0</text>
<text transform="translate(789 344) rotate(90)" text-anchor="middle" font-size="9" textLength="51" lengthAdjust="spacingAndGlyphs">counts/sec</text>

<text x="886" y="404" font-size="8">10</text><text x="895" y="400" font-size="5">7</text>
<text x="886" y="438" font-size="8">10</text><text x="895" y="434" font-size="5">6</text>
<text x="886" y="472" font-size="8">10</text><text x="895" y="468" font-size="5">5</text>
<text x="886" y="506" font-size="8">10</text><text x="895" y="502" font-size="5">4</text>
<text x="886" y="540" font-size="8">10</text><text x="895" y="536" font-size="5">3</text>
<text x="886" y="574" font-size="8">10</text><text x="895" y="570" font-size="5">2</text>
<text transform="translate(918 487) rotate(90)" text-anchor="middle" font-size="9.500" textLength="132" lengthAdjust="spacingAndGlyphs">cnts/(cm**2-sr-sec-eV)</text>

<text class="t1l" x="108" y="228.500">2005/040</text>
<text class="t1l" x="108" y="241">SZA (deg)</text>
<text class="t1l" x="108" y="253">LT (hr)</text>
<text class="t1l" x="108" y="265">Alt (km)</text>
<text class="t1l" x="108" y="277">ELon (deg)</text>

<text class="t1" x="143.500" y="228.500">10:45</text><text class="t1" x="237.500" y="228.500">11:25</text><text class="t1" x="331.500" y="228.500">12:05</text><text class="t1" x="425" y="228.500">12:45</text><text class="t1" x="520" y="228.500">13:25</text><text class="t1" x="613.500" y="228.500">14:05</text><text class="t1" x="707" y="228.500">14:45</text>
<text class="t1" x="143.500" y="241">57.49</text><text class="t1" x="237.500" y="241">138.36</text><text class="t1" x="331.500" y="241">78.09</text><text class="t1" x="425" y="241">81.74</text><text class="t1" x="520" y="241">137.86</text><text class="t1" x="613.500" y="241">71.09</text><text class="t1" x="707" y="241">68.30</text>
<text class="t1" x="143.500" y="253">0.0e+00</text><text class="t1" x="237.500" y="253">0.0e+00</text><text class="t1" x="331.500" y="253">0.0e+00</text><text class="t1" x="425" y="253">0.0e+00</text><text class="t1" x="520" y="253">0.0e+00</text><text class="t1" x="613.500" y="253">0.0e+00</text><text class="t1" x="707" y="253">0.0e+00</text>
<text class="t1" x="143.500" y="265">418.18</text><text class="t1" x="237.500" y="265">392.70</text><text class="t1" x="331.500" y="265">367.07</text><text class="t1" x="425" y="265">419.47</text><text class="t1" x="520" y="265">388.77</text><text class="t1" x="613.500" y="265">368.10</text><text class="t1" x="707" y="265">420.52</text>
<text class="t1" x="143.500" y="277">337.43</text><text class="t1" x="237.500" y="277">152.50</text><text class="t1" x="331.500" y="277">327.07</text><text class="t1" x="425" y="277">306.56</text><text class="t1" x="520" y="277">122.95</text><text class="t1" x="613.500" y="277">296.96</text><text class="t1" x="707" y="277">274.38</text>

<text class="t2l" x="113" y="594.500">2005/040</text>
<text class="t2l" x="113" y="608">SZA (deg)</text>
<text class="t2l" x="113" y="622">SolLat (deg)</text>
<text class="t2l" x="113" y="636">LT (hr)</text>
<text class="t2l" x="113" y="649.500">PdLon (deg)</text>

<text class="t2" x="141" y="594.500">10:45</text><text class="t2" x="235" y="594.500">11:25</text><text class="t2" x="329" y="594.500">12:05</text><text class="t2" x="423" y="594.500">12:45</text><text class="t2" x="517" y="594.500">13:25</text><text class="t2" x="610" y="594.500">14:05</text><text class="t2" x="704" y="594.500">14:45</text>
<text class="t2" x="141" y="608">163.01</text><text class="t2" x="235" y="608">172.97</text><text class="t2" x="329" y="608">122.31</text><text class="t2" x="423" y="608">10.64</text><text class="t2" x="517" y="608">68.97</text><text class="t2" x="610" y="608">93.34</text><text class="t2" x="704" y="608">109.20</text>
<text class="t2" x="141" y="622">-13.45</text><text class="t2" x="235" y="622">7.03</text><text class="t2" x="329" y="622">50.37</text><text class="t2" x="423" y="622">-10.52</text><text class="t2" x="517" y="622">-57.70</text><text class="t2" x="610" y="622">-63.22</text><text class="t2" x="704" y="622">-56.84</text>
<text class="t2" x="141" y="636">23.30</text><text class="t2" x="235" y="636">13.55</text><text class="t2" x="329" y="636">2.21</text><text class="t2" x="423" y="636">12.10</text><text class="t2" x="517" y="636">15.19</text><text class="t2" x="610" y="636">18.50</text><text class="t2" x="704" y="636">20.46</text>
<text class="t2" x="141" y="649.500">115.20</text><text class="t2" x="235" y="649.500">106.93</text><text class="t2" x="329" y="649.500">101.20</text><text class="t2" x="423" y="649.500">267.65</text><text class="t2" x="517" y="649.500">263.65</text><text class="t2" x="610" y="649.500">278.21</text><text class="t2" x="704" y="649.500">39.92</text>
</g>
</svg>
</body></html>
